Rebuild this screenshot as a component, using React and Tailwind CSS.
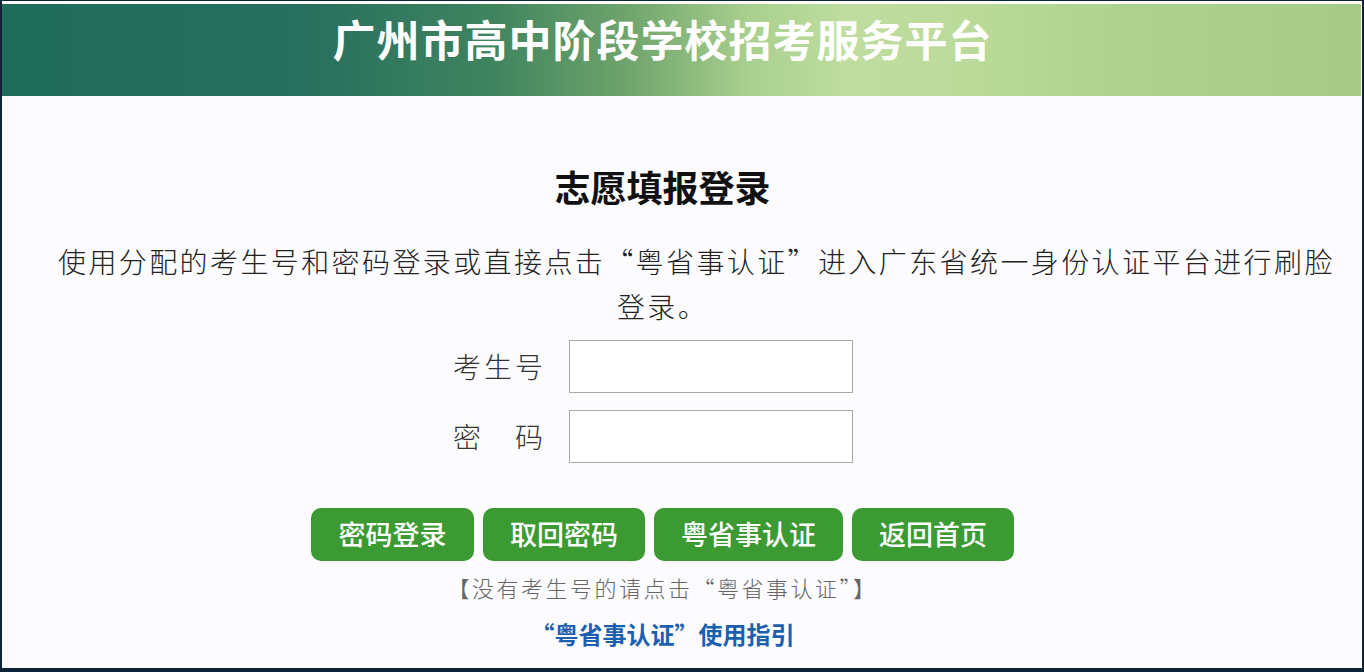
import React from "react";

const cjk = { fontFamily: '"Noto Sans CJK SC", "Noto Sans", sans-serif' };

function Field({ label, type = "text" }) {
  return (
    <div className="flex items-center">
      <label className="w-[100px] shrink-0 whitespace-nowrap text-right text-[28px] leading-[53px] tracking-[3px] text-[#333] font-light">
        {label}
      </label>
      <input
        type={type}
        className="ml-[23px] h-[53px] w-[284px] border border-[#a9a9a9] bg-white outline-none"
      />
    </div>
  );
}

const buttons = [
  { text: "密码登录", w: "w-[163px]" },
  { text: "取回密码", w: "w-[162px]" },
  { text: "粤省事认证", w: "w-[189px]" },
  { text: "返回首页", w: "w-[162px]" },
];

export default function App() {
  return (
    <div className="h-[672px] w-full bg-[#0e2238] pt-[1px] px-[2px] pb-[4px]" style={cjk}>
      <div className="h-full bg-[#fcfbfd] pt-[3px] pr-[1px] overflow-hidden">
        {/* banner */}
        <div className="h-[92px] bg-[linear-gradient(to_right,#1f6c5c_0%,#276f5e_22%,#3f845f_36%,#6fa46c_46%,#a9d08e_55%,#bedd9e_62%,#bcdb9b_70%,#afd290_82%,#a7ca87_100%)] pt-[8px] pr-[38px] text-center">
          <h1 className="text-[43px] leading-[52px] font-bold tracking-[1px] text-white">
            广州市高中阶段学校招考服务平台
          </h1>
        </div>

        <div className="flex flex-col items-center pr-[38px]">
          <h2 className="mt-[70px] text-[36px] leading-[40px] font-bold text-[#111]">
            志愿填报登录
          </h2>
        </div>

        <div className="mt-[33px] text-[28px] leading-[45px] tracking-[2.4px] text-[#222] font-light">
          <div className="ml-[56px] whitespace-nowrap">
            使用分配的考生号和密码登录或直接点击“粤省事认证”进入广东省统一身份认证平台进行刷脸
          </div>
          <div className="pr-[38px] text-center">登录。</div>
        </div>

        <div className="flex flex-col items-center pr-[64px]">
          <div className="mt-[11px] flex flex-col gap-[17px]">
            <Field label="考生号" />
            <Field label="密　码" type="password" />
          </div>
        </div>

        <div className="flex flex-col items-center pr-[38px]">
          <div className="mt-[45px] flex gap-[9px]">
            {buttons.map((b) => (
              <button
                key={b.text}
                className={`${b.w} h-[53px] rounded-[10px] bg-[#3b9a31] text-[27px] font-medium text-white`}
              >
                {b.text}
              </button>
            ))}
          </div>

          <p className="mt-[11px] text-[22px] leading-[30px] tracking-[2.5px] text-[#666] font-light">
            【没有考生号的请点击“粤省事认证”】
          </p>

          <a href="#" className="mt-[17px] text-[24px] leading-[30px] font-bold text-[#1b5fb0]">
            “粤省事认证”使用指引
          </a>
        </div>
      </div>
    </div>
  );
}
